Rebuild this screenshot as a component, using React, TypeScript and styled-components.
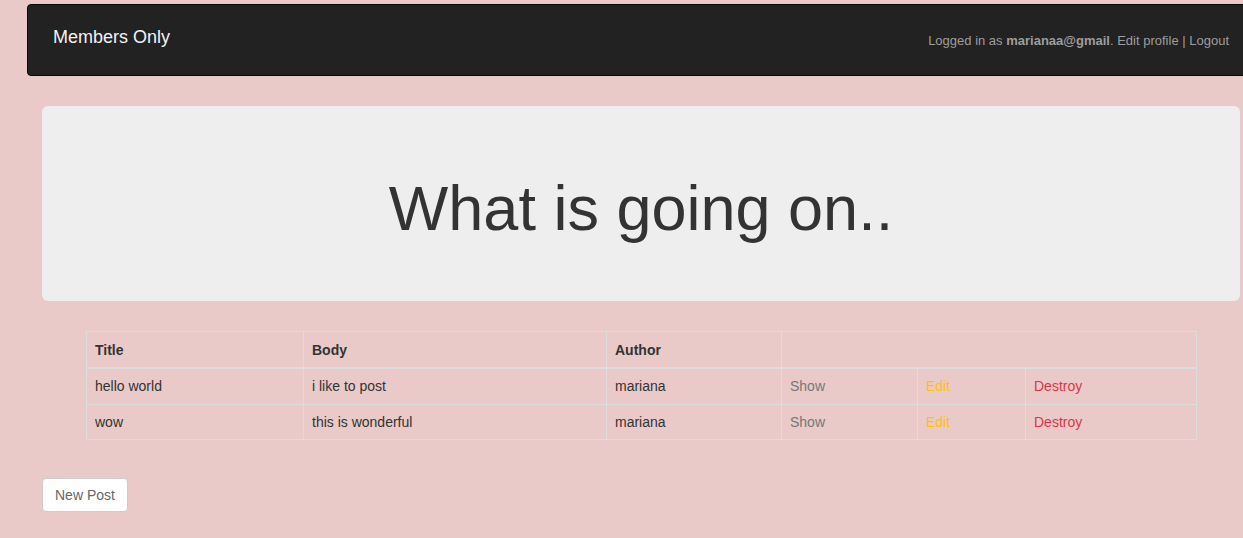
import React from "react";
import styled, { createGlobalStyle } from "styled-components";

const GlobalStyle = createGlobalStyle`
  html, body {
    margin: 0;
    padding: 0;
    overflow-x: hidden;
  }
  body {
    background: #e9cac8;
    font-family: "Liberation Sans", Helvetica, Arial, sans-serif;
    font-size: 14px;
    line-height: 1.42857;
    color: #333;
  }
  * { box-sizing: border-box; }
`;

const Page = styled.div`
  padding-top: 4px;
  padding-bottom: 26px;
`;

const Navbar = styled.nav`
  display: flex;
  justify-content: space-between;
  align-items: flex-start;
  height: 72px;
  margin: 0 -30px 0 27px;
  background: #222;
  border: 1px solid #080808;
  border-radius: 4px;
`;

const Brand = styled.a`
  padding: 22px 0 0 25px;
  font-size: 18px;
  line-height: 20px;
  color: #f2f2f2;
  text-decoration: none;
`;

const UserInfo = styled.div`
  padding: 26px 43px 0 0;
  font-size: 13px;
  line-height: 20px;
  color: #9d9d9d;
`;

const NavLink = styled.a`
  color: #9d9d9d;
  text-decoration: none;
`;

const Main = styled.main`
  padding: 0 3px 0 42px;
`;

const Jumbotron = styled.section`
  margin-top: 30px;
  padding: 48px 60px;
  background: #eee;
  border-radius: 6px;
  text-align: center;
`;

const Heading = styled.h1`
  margin: 20px 0 10px;
  font-size: 63px;
  font-weight: 500;
  line-height: 1.1;
  color: #333;
`;

const Table = styled.table`
  width: 1110px;
  margin: 30px 0 0 44px;
  border-collapse: collapse;
  table-layout: fixed;
  border: 1px solid #ddd;
`;

const Th = styled.th`
  padding: 9px 8px 7px;
  line-height: 19px;
  text-align: left;
  font-weight: bold;
  border: 1px solid #ddd;
  border-bottom: 2px solid #ddd;
`;

const Td = styled.td`
  padding: 8px;
  line-height: 18.5px;
  border: 1px solid #ddd;
`;

const ActionLink = styled.a<{ $tone: "show" | "edit" | "destroy" }>`
  text-decoration: none;
  color: ${(p) =>
    p.$tone === "show" ? "#777" : p.$tone === "edit" ? "#ffc107" : "#dc3545"};
`;

const Button = styled.button`
  margin-top: 38px;
  padding: 6px 12px;
  font-family: inherit;
  font-size: 14px;
  line-height: 20px;
  color: #666;
  background: #fff;
  border: 1px solid #ccc;
  border-radius: 4px;
`;

const posts = [
  { title: "hello world", body: "i like to post", author: "mariana" },
  { title: "wow", body: "this is wonderful", author: "mariana" },
];

const widths = [217, 303, 175, 136, 108, 171];

export default function App() {
  return (
    <>
      <GlobalStyle />
      <Page>
        <Navbar>
          <Brand href="#">Members Only</Brand>
          <UserInfo>
            Logged in as <b>marianaa@gmail</b>. <NavLink href="#">Edit profile</NavLink> |{" "}
            <NavLink href="#">Logout</NavLink>
          </UserInfo>
        </Navbar>
        <Main>
          <Jumbotron>
            <Heading>What is going on..</Heading>
          </Jumbotron>
          <Table>
            <colgroup>
              {widths.map((w, i) => (
                <col key={i} style={{ width: w }} />
              ))}
            </colgroup>
            <thead>
              <tr>
                <Th>Title</Th>
                <Th>Body</Th>
                <Th>Author</Th>
                <Th colSpan={3}></Th>
              </tr>
            </thead>
            <tbody>
              {posts.map((p, i) => (
                <tr key={i}>
                  <Td>{p.title}</Td>
                  <Td>{p.body}</Td>
                  <Td>{p.author}</Td>
                  <Td>
                    <ActionLink $tone="show" href="#">Show</ActionLink>
                  </Td>
                  <Td>
                    <ActionLink $tone="edit" href="#">Edit</ActionLink>
                  </Td>
                  <Td>
                    <ActionLink $tone="destroy" href="#">Destroy</ActionLink>
                  </Td>
                </tr>
              ))}
            </tbody>
          </Table>
          <Button>New Post</Button>
        </Main>
      </Page>
    </>
  );
}
